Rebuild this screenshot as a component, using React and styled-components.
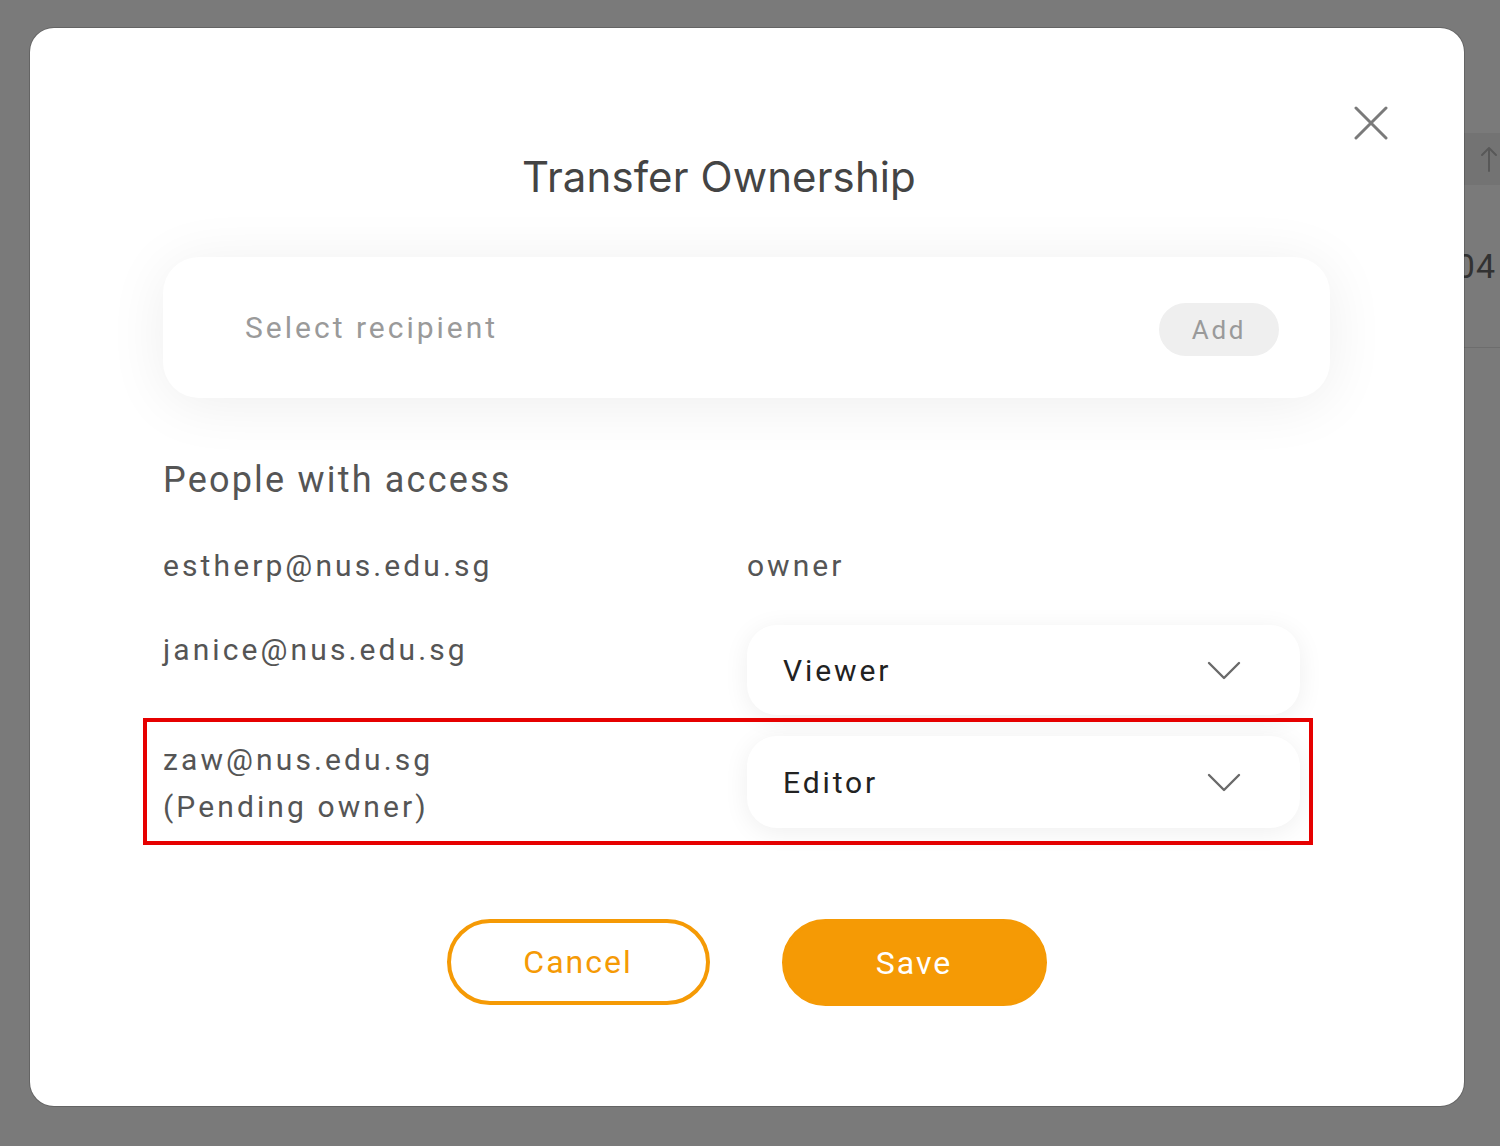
import React from "react";
import styled, { createGlobalStyle } from "styled-components";

const GlobalStyle = createGlobalStyle`
    html, body {
        margin: 0;
        padding: 0;
        background: #ffffff;
        font-family: Roboto, "Liberation Sans", sans-serif;
    }
`;

const Page = styled.div`
    width: 1500px;
    height: 1146px;
    position: relative;
    overflow: hidden;
    background: #ffffff;
`;

// the list page that sits behind the dialog
const Table = styled.div`
    padding: 133px 0 0 1420px;
`;

const TableHead = styled.div`
    height: 52px;
    background: #f1f1f1;
    display: flex;
    align-items: center;
    justify-content: flex-end;
    padding-right: 3px;
`;

const TableRow = styled.div`
    height: 162px;
    border-bottom: 1px solid #e4e4e4;
    display: flex;
    align-items: center;
    justify-content: flex-end;
    padding-right: 4px;
    color: #6a6a6a;
    font-size: 34px;
    letter-spacing: 1px;
`;

const Overlay = styled.div`
    position: absolute;
    inset: 0;
    background: rgba(0, 0, 0, 0.52);
`;

const Modal = styled.div`
    position: absolute;
    left: 30px;
    top: 28px;
    width: 1434px;
    height: 1078px;
    box-sizing: border-box;
    background: #ffffff;
    border-radius: 24px;
    box-shadow: 0 0 0 1px rgba(0, 0, 0, 0.18);
    padding: 65px 0 0;
    display: flex;
    flex-direction: column;
`;

const Header = styled.div`
    display: flex;
    align-items: flex-start;
    padding: 0 63px 0 133px;
`;

const Title = styled.h2`
    flex: 1;
    margin: 59px 0 0;
    text-align: center;
    font-family: Inter, "Liberation Sans", sans-serif;
    font-weight: 400;
    font-size: 42px;
    line-height: 50px;
    color: #444444;
    letter-spacing: 0.1px;
`;

const CloseButton = styled.button`
    width: 60px;
    height: 60px;
    margin-left: 66px;
    border: none;
    background: none;
    padding: 0;
    display: flex;
    align-items: center;
    justify-content: center;
    cursor: pointer;
`;

const Body = styled.div`
    padding: 0 134px 0 133px;
    display: flex;
    flex-direction: column;
`;

const RecipientCard = styled.div`
    margin-top: 55px;
    height: 141px;
    border-radius: 36px;
    background: #ffffff;
    box-shadow: 0 6px 60px rgba(0, 0, 0, 0.07);
    display: flex;
    align-items: center;
    justify-content: space-between;
    padding: 0 51px 0 82px;
`;

const Placeholder = styled.span`
    font-size: 30px;
    color: #9a9a9a;
    letter-spacing: 3px;
`;

const AddButton = styled.button`
    width: 120px;
    height: 53px;
    margin-top: 4px;
    border: none;
    border-radius: 27px;
    background: #efefef;
    color: #9a9a9a;
    font-family: Roboto, "Liberation Sans", sans-serif;
    font-size: 26px;
    letter-spacing: 2.7px;
    cursor: pointer;
`;

const SectionTitle = styled.h3`
    margin: 60px 0 0;
    font-weight: 400;
    font-size: 36px;
    line-height: 44px;
    color: #555555;
    letter-spacing: 2.2px;
`;

const PersonRow = styled.div`
    display: grid;
    grid-template-columns: 584px 553px;
    align-items: start;
    margin-top: ${(p) => p.gap}px;
    ${(p) =>
        p.highlight &&
        `
        margin-left: -20px;
        margin-right: 17px;
        border: 4px solid #e60000;
        padding: 14px 9px 11px 16px;
    `}
`;

const Email = styled.div`
    font-size: 30px;
    line-height: ${(p) => p.lh || 44}px;
    padding-top: ${(p) => p.top || 0}px;
    color: #555555;
    letter-spacing: 3.1px;
`;

const RoleText = styled.div`
    font-size: 30px;
    line-height: 44px;
    color: #555555;
    letter-spacing: 3px;
`;

const RoleSelect = styled.div`
    height: ${(p) => p.h}px;
    border-radius: 30px;
    background: #ffffff;
    box-shadow: 0 4px 26px rgba(0, 0, 0, 0.065);
    display: flex;
    align-items: center;
    justify-content: space-between;
    padding: 0 59px 0 36px;
    font-size: 30px;
    color: #222222;
    letter-spacing: 2.9px;
`;

const Actions = styled.div`
    margin-top: 74px;
    display: flex;
    justify-content: center;
    gap: 72px;
`;

const PillButton = styled.button`
    width: ${(p) => (p.primary ? 265 : 263)}px;
    height: ${(p) => (p.primary ? 87 : 86)}px;
    box-sizing: border-box;
    border-radius: 44px;
    border: 4px solid #f59a05;
    background: ${(p) => (p.primary ? "#f59a05" : "#ffffff")};
    color: ${(p) => (p.primary ? "#ffffff" : "#f59a05")};
    font-family: Roboto, "Liberation Sans", sans-serif;
    font-size: 32px;
    letter-spacing: 2px;
    cursor: pointer;
`;

const CloseIcon = () => (
    <svg width="34" height="34" viewBox="0 0 34 34">
        <path d="M2 2 L32 32 M32 2 L2 32" stroke="#7a7a7a" strokeWidth="3" strokeLinecap="round" />
    </svg>
);

const Chevron = () => (
    <svg width="34" height="19" viewBox="0 0 34 19">
        <path d="M2 2 L17 17 L32 2" fill="none" stroke="#6a6a6a" strokeWidth="2.4" strokeLinecap="round" strokeLinejoin="round" />
    </svg>
);

const SortArrow = () => (
    <svg width="16" height="26" viewBox="0 0 16 26">
        <path d="M8 25 L8 2 M1 9 L8 2 L15 9" fill="none" stroke="#b8b8b8" strokeWidth="2" strokeLinecap="round" strokeLinejoin="round" />
    </svg>
);

const App = () => {
    return (
        <Page>
            <GlobalStyle />
            <Table>
                <TableHead>
                    <SortArrow />
                </TableHead>
                <TableRow>04</TableRow>
            </Table>
            <Overlay />
            <Modal>
                <Header>
                    <Title>Transfer Ownership</Title>
                    <CloseButton aria-label="Close">
                        <CloseIcon />
                    </CloseButton>
                </Header>
                <Body>
                    <RecipientCard>
                        <Placeholder>Select recipient</Placeholder>
                        <AddButton>Add</AddButton>
                    </RecipientCard>
                    <SectionTitle>People with access</SectionTitle>
                    <PersonRow gap={42}>
                        <Email>estherp@nus.edu.sg</Email>
                        <RoleText>owner</RoleText>
                    </PersonRow>
                    <PersonRow gap={37}>
                        <Email top={3}>janice@nus.edu.sg</Email>
                        <RoleSelect h={90}>
                            Viewer
                            <Chevron />
                        </RoleSelect>
                    </PersonRow>
                    <PersonRow gap={3} highlight>
                        <Email lh={47}>
                            zaw@nus.edu.sg
                            <br />
                            (Pending owner)
                        </Email>
                        <RoleSelect h={92}>
                            Editor
                            <Chevron />
                        </RoleSelect>
                    </PersonRow>
                    <Actions>
                        <PillButton>Cancel</PillButton>
                        <PillButton primary>Save</PillButton>
                    </Actions>
                </Body>
            </Modal>
        </Page>
    );
};

export default App;
